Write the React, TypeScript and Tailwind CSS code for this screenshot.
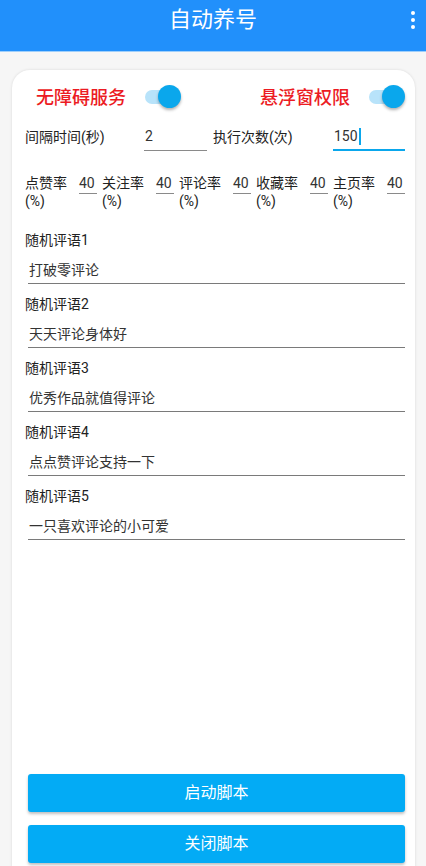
import React from "react";

const FONT = { fontFamily: "Roboto, 'Noto Sans CJK SC', sans-serif" };

function Toggle() {
  return (
    <div className="relative w-[36px] h-[24px] flex items-center">
      <div className="w-[34px] h-[14px] rounded-full bg-[#b8e3fa]" />
      <div className="absolute right-0 top-[0px] w-[23px] h-[23px] rounded-full bg-[#0aa7ec] shadow-[0_2px_3px_rgba(0,0,0,0.3)]" />
    </div>
  );
}

function Pct({ label }: { label: string }) {
  return (
    <div className="flex w-[72px]">
      <div className="w-[54px] text-[14px] leading-[18px] text-[#222]">
        <div>{label}</div>
        <div>(%)</div>
      </div>
      <div className="w-[18px] h-[20px] border-b border-[#8a8a8a] text-[14px] leading-[18px] text-[#333]">40</div>
    </div>
  );
}

const comments = [
  ["随机评语1", "打破零评论"],
  ["随机评语2", "天天评论身体好"],
  ["随机评语3", "优秀作品就值得评论"],
  ["随机评语4", "点点赞评论支持一下"],
  ["随机评语5", "一只喜欢评论的小可爱"],
];

export default function App() {
  return (
    <div style={FONT} className="w-[426px] h-[866px] overflow-hidden bg-[#f6f6f6] flex flex-col">
      <div className="h-[52px] shrink-0 bg-[#2190fb] border-b border-[#9fcffb] relative flex justify-center">
        <div className="mt-[6px] text-[22px] leading-[28px] text-white">自动养号</div>
        <div className="absolute right-[11px] top-[11px] flex flex-col gap-[3px]">
          <div className="w-[4px] h-[4px] rounded-full bg-white" />
          <div className="w-[4px] h-[4px] rounded-full bg-white" />
          <div className="w-[4px] h-[4px] rounded-full bg-white" />
        </div>
      </div>
      <div className="ml-[12px] mr-[11px] mt-[18px] h-[814px] shrink-0 bg-white rounded-[18px] shadow-[0_0_3px_rgba(0,0,0,0.12)] pl-[13px] pr-[10px] pt-[12px] pb-[21px] flex flex-col">
        <div className="h-[30px] flex items-center justify-between pl-[11px]">
          <div className="flex items-center gap-[19px]">
            <span className="text-[18px] font-medium text-[#ec1b23]">无障碍服务</span>
            <Toggle />
          </div>
          <div className="flex items-center gap-[19px]">
            <span className="text-[18px] font-medium text-[#ec1b23]">悬浮窗权限</span>
            <Toggle />
          </div>
        </div>
        <div className="mt-[11px] flex items-center text-[14px] text-[#222]">
          <div className="w-[119px]">间隔时间(秒)</div>
          <div className="w-[63px] h-[28px] border-b border-[#8a8a8a] pl-[1px] flex items-center text-[#333]">2</div>
          <div className="ml-[6px] w-[120px]">执行次数(次)</div>
          <div className="flex-1 h-[28px] border-b-2 border-[#0aa7ec] pl-[1px] flex items-center text-[#333]">
            150<span className="inline-block w-[2px] h-[17px] bg-[#0aa7ec] ml-[1px]" />
          </div>
        </div>
        <div className="mt-[23px] flex gap-[5px]">
          <Pct label="点赞率" />
          <Pct label="关注率" />
          <Pct label="评论率" />
          <Pct label="收藏率" />
          <Pct label="主页率" />
        </div>
        <div className="mt-[20px] flex flex-col">
          {comments.map(([l, v]) => (
            <div key={l} className="h-[64px] flex flex-col">
              <div className="h-[20px] leading-[20px] text-[14px] text-[#222]">{l}</div>
              <div className="mt-[8px] ml-[3px] h-[26px] border-b border-[#7a7a7a] pl-[1px] flex items-center text-[14px] text-[#333]">{v}</div>
            </div>
          ))}
        </div>
        <div className="mt-auto ml-[3px] flex flex-col gap-[13px]">
          <button className="h-[38px] rounded-[3px] bg-[#03abf5] text-white text-[16px] shadow-[0_2px_3px_rgba(0,0,0,0.25)]">启动脚本</button>
          <button className="h-[38px] rounded-[3px] bg-[#03abf5] text-white text-[16px] shadow-[0_2px_3px_rgba(0,0,0,0.25)]">关闭脚本</button>
        </div>
      </div>
    </div>
  );
}
